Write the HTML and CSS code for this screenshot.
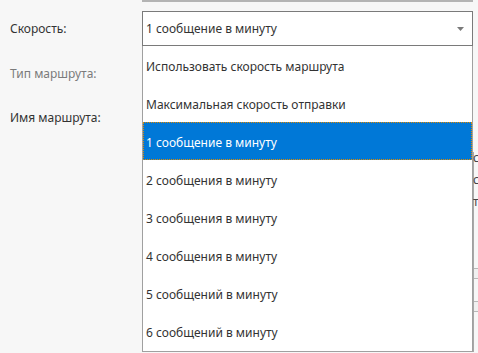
FILE: index.html
```html
<!DOCTYPE html>
<html lang="ru">
<head>
  <meta charset="UTF-8">
  <title>Скорость</title>
  <link rel="stylesheet" href="styles.css">
</head>
<body>
  <div class="top-edge"></div>
  <div class="form">
    <div class="label">Скорость:</div>
    <div class="select">
      <span class="select-value">1 сообщение в минуту</span>
      <svg class="arrow" width="7" height="4" viewBox="0 0 7 4"><path d="M0 0H7L3.5 4Z" fill="#7a7a7a"/></svg>
      <ul class="options">
        <li>Использовать скорость маршрута</li>
        <li>Максимальная скорость отправки</li>
        <li class="selected">1 сообщение в минуту</li>
        <li>2 сообщения в минуту</li>
        <li>3 сообщения в минуту</li>
        <li>4 сообщения в минуту</li>
        <li>5 сообщений в минуту</li>
        <li>6 сообщений в минуту</li>
      </ul>
    </div>
    <div class="label disabled">Тип маршрута:</div>
    <div class="field"></div>
    <div class="label">Имя маршрута:</div>
    <div class="field"></div>
  </div>
  <div class="behind">
    <div class="behind-text">ст</div>
    <div class="behind-text">с</div>
    <div class="behind-text">т</div>
    <div class="behind-rows">
      <div class="behind-row"></div>
      <div class="behind-row"></div>
    </div>
  </div>
</body>
</html>
```

FILE: styles.css
```css
* {
  box-sizing: border-box;
}

body {
  margin: 0;
  height: 353px;
  overflow: hidden;
  background: #f7f7f7;
  font-family: 'Noto Sans', 'Open Sans', sans-serif;
  font-size: 12px;
  color: #333;
  position: relative;
}

.top-edge {
  margin-left: 142px;
  width: 331px;
  height: 2px;
  background: #b4b4b4;
}

.form {
  display: grid;
  grid-template-columns: 132px 331px;
  grid-template-rows: 35px 32px 32px;
  row-gap: 12px;
  padding: 9px 0 0 10px;
  align-items: center;
  position: relative;
  z-index: 2;
}

.label {
  line-height: 16px;
}

.label.disabled {
  color: #7b7b7b;
}

.select {
  position: relative;
  height: 35px;
  border: 1px solid #7a7a7a;
  background: #fff;
  display: flex;
  align-items: center;
  padding: 0 8px 0 3px;
}

.select-value {
  flex: 1;
}

.arrow {
  margin-top: 1px;
}

.options {
  position: absolute;
  top: 34px;
  left: -1px;
  width: 331px;
  height: 306px;
  margin: 0;
  padding: 0;
  list-style: none;
  background: #fff;
  border: 1px solid #a0a0a0;
  border-top: none;
}

.options li {
  height: 38px;
  padding: 2px 0 0 3px;
  display: flex;
  align-items: center;
}

.options li.selected {
  background: #0078d7;
  color: #fff;
  outline: 1px dotted #e08a00;
  outline-offset: -1px;
}

.behind {
  position: absolute;
  left: 473px;
  top: 152px;
  width: 10px;
  height: 200px;
  border-left: 1px solid #a8a8a8;
  z-index: 1;
  font-size: 12px;
  color: #444;
}

.behind-text {
  height: 12px;
  line-height: 12px;
  margin-bottom: 10px;
  margin-left: -1px;
}

.behind-rows {
  margin-top: 60px;
}

.behind-row {
  height: 11px;
  border-top: 1px solid #b8b8b8;
  border-bottom: 1px solid #b8b8b8;
  background: #f0f0f0;
  margin-bottom: 22px;
}
```
